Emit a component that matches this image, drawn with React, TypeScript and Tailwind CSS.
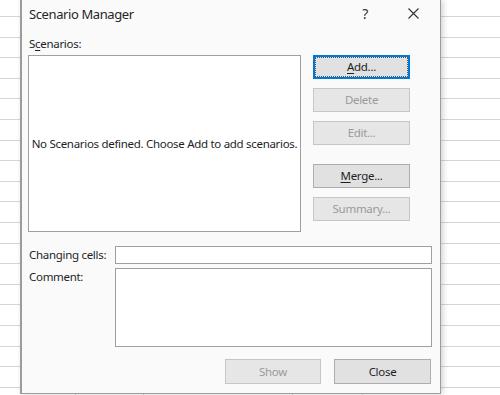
import React from "react";

const rows = Array.from({ length: 19 });

function Btn({
  children,
  disabled,
  focused,
  className = "",
}: {
  children: React.ReactNode;
  disabled?: boolean;
  focused?: boolean;
  className?: string;
}) {
  if (focused) {
    return (
      <div
        className={`flex h-[24px] w-[97px] items-center justify-center border-2 border-[#0078d7] bg-[#e1e1e1] ${className}`}
      >
        <div className="flex h-full w-full items-center justify-center border border-dotted border-[#555] text-[#1e1e1e]">
          {children}
        </div>
      </div>
    );
  }
  return (
    <div
      className={`flex h-[24px] w-[97px] items-center justify-center border ${
        disabled
          ? "border-[#c6c6c6] bg-[#e6e6e6] text-[#9a9a9a]"
          : "border-[#adadad] bg-[#e1e1e1] text-[#1e1e1e]"
      } ${className}`}
    >
      {children}
    </div>
  );
}

export default function App() {
  return (
    <div className="relative h-[395px] w-[500px] overflow-hidden bg-white font-['Noto_Sans',sans-serif] text-[11.5px] leading-[16px] tracking-[-0.3px] text-[#1e1e1e]">
      {/* spreadsheet background */}
      <div className="absolute inset-0 flex flex-col">
        <div className="h-[17px] shrink-0 border-b border-[#d6d6d6]" />
        {rows.map((_, i) => (
          <div
            key={i}
            className="h-[20.6px] shrink-0 border-b border-[#d6d6d6]"
          />
        ))}
      </div>
      <div className="absolute inset-0 flex">
        <div className="w-[76px] shrink-0 border-r border-[#d6d6d6]" />
        <div className="w-[68px] shrink-0 border-r border-[#d6d6d6]" />
        <div className="w-[149px] shrink-0 border-r border-[#d6d6d6]" />
        <div className="w-[70px] shrink-0 border-r border-[#d6d6d6]" />
      </div>

      {/* dialog */}
      <div className="absolute left-[20px] top-0 flex h-[394px] w-[421px] flex-col border-b border-l-2 border-r border-[#9c9c9c] bg-[#fafafa] shadow-[2px_0_6px_rgba(0,0,0,0.18)]">
        {/* title bar */}
        <div className="flex h-[27px] shrink-0 items-center">
          <span className="ml-[7px] text-[13px] leading-[20px] tracking-[-0.4px] text-[#262626]">
            Scenario Manager
          </span>
          <span className="ml-auto text-[14px] leading-[20px] text-[#333]">
            ?
          </span>
          <svg
            className="ml-[40px] mr-[21px]"
            width="11"
            height="11"
            viewBox="0 0 11 11"
          >
            <path
              d="M0.5 0.5 L10.5 10.5 M10.5 0.5 L0.5 10.5"
              stroke="#333"
              strokeWidth="1.1"
              fill="none"
            />
          </svg>
        </div>

        {/* Scenarios label */}
        <div className="ml-[7px] mt-[9px] h-[16px]">
          S<span className="underline underline-offset-2">c</span>enarios:
        </div>

        {/* list + buttons */}
        <div className="mt-[3px] flex">
          <div className="ml-[6px] flex h-[177px] w-[273px] items-center justify-center border border-[#a0a0a0] bg-white">
            <span className="whitespace-nowrap">
              No Scenarios defined. Choose Add to add scenarios.
            </span>
          </div>
          <div className="ml-[12px] flex flex-col">
            <Btn focused>
              <span>
                <span className="underline underline-offset-2">A</span>dd...
              </span>
            </Btn>
            <Btn disabled className="mt-[9px]">
              Delete
            </Btn>
            <Btn disabled className="mt-[9px]">
              Edit...
            </Btn>
            <Btn className="mt-[19px]">
              <span>
                <span className="underline underline-offset-2">M</span>erge...
              </span>
            </Btn>
            <Btn disabled className="mt-[9px]">
              Summary...
            </Btn>
          </div>
        </div>

        {/* changing cells */}
        <div className="mt-[14px] flex items-center">
          <div className="ml-[7px] w-[86px]">Changing cells:</div>
          <div className="h-[18px] w-[317px] border border-[#a0a0a0] bg-white" />
        </div>

        {/* comment */}
        <div className="mt-[4px] flex items-start">
          <div className="ml-[7px] mt-[1px] w-[86px]">Comment:</div>
          <div className="h-[79px] w-[317px] border border-[#a0a0a0] bg-white" />
        </div>

        {/* bottom buttons */}
        <div className="mr-[9px] mt-[12px] flex justify-end gap-[13px]">
          <div className="flex h-[25px] w-[96px] items-center justify-center border border-[#c6c6c6] bg-[#e6e6e6] text-[#9a9a9a]">
            Show
          </div>
          <div className="flex h-[25px] w-[97px] items-center justify-center border border-[#adadad] bg-[#e1e1e1] text-[#1e1e1e]">
            Close
          </div>
        </div>
      </div>
    </div>
  );
}
